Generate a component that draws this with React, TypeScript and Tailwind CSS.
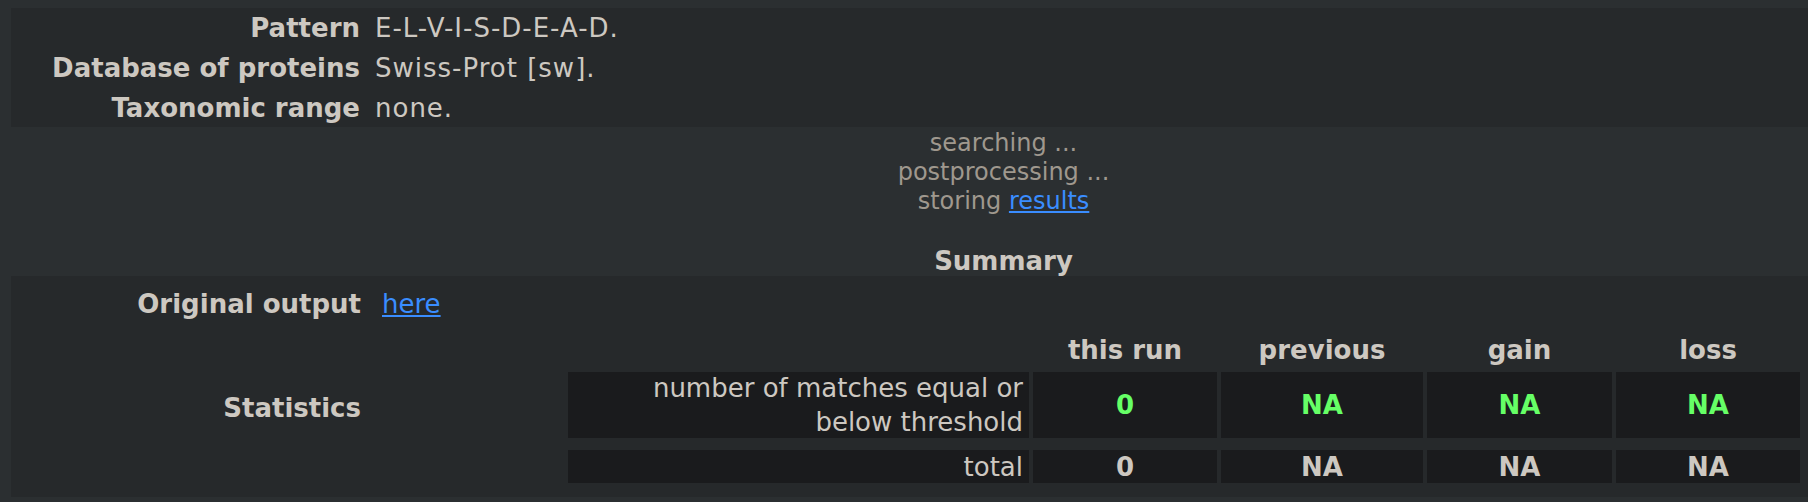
const fields = [
  { label: "Pattern", value: "E-L-V-I-S-D-E-A-D." },
  { label: "Database of proteins", value: "Swiss-Prot [sw]." },
  { label: "Taxonomic range", value: "none." },
]

const heads = ["this run", "previous", "gain", "loss"]

const rows = [
  {
    label: ["number of matches equal or", "below threshold"],
    values: ["0", "NA", "NA", "NA"],
    green: true,
    height: "h-[66px]",
  },
  {
    label: ["total"],
    values: ["0", "NA", "NA", "NA"],
    green: false,
    height: "h-[33px]",
  },
]

export default function App() {
  return (
    <div
      className="h-[502px] w-[1808px] overflow-hidden bg-[#2b2f31] pt-[8px] text-[26px] leading-[30px] text-[#cdc8c1]"
      style={{ fontFamily: '"DejaVu Sans", Verdana, sans-serif' }}
    >
      <div className="ml-[11px] w-[1985px]">
        {/* query parameters */}
        <div className="flex h-[119px] flex-col bg-[#26292b]">
          {fields.map((f, i) => (
            <div key={f.label} className={`flex items-center ${i === 2 ? "h-[39px]" : "h-[40px]"}`}>
              <span className="w-[349px] text-right font-bold">{f.label}</span>
              <span className="ml-[15px] tracking-[1px]">{f.value}</span>
            </div>
          ))}
        </div>

        {/* progress */}
        <div className="mt-[2px] flex flex-col items-center text-[24px] leading-[29px] text-[#9f988e]">
          <span>searching ...</span>
          <span>postprocessing ...</span>
          <span>
            storing{" "}
            <a href="#" className="text-[#3a8dff] underline">
              results
            </a>
          </span>
        </div>

        <div className="mt-[30px] text-center font-bold">Summary</div>

        {/* summary table */}
        <div className="flex h-[221px] flex-col bg-[#26292b]">
          <div className="flex h-[56px] items-center">
            <span className="w-[350px] text-right font-bold">Original output</span>
            <a href="#" className="ml-[21px] text-[#3a8dff] underline">
              here
            </a>
          </div>
          <div className="flex items-center">
            <span className="w-[350px] text-right font-bold">Statistics</span>
            <div className="ml-[207px] grid grid-cols-[461px_184px_202px_185px_184px] gap-x-[4px]">
              <div className="h-[36px]" />
              {heads.map((h) => (
                <div key={h} className="flex h-[36px] items-center justify-center font-bold">
                  {h}
                </div>
              ))}
              {rows.map((r, ri) => (
                <div key={ri} className="contents">
                  <div
                    className={`${r.height} ${ri === 0 ? "mt-[4px] leading-[34px]" : "mt-[12px]"} flex flex-col items-end justify-center bg-[#1a1b1d] pr-[6px] text-right`}
                  >
                    {r.label.map((l) => (
                      <span key={l}>{l}</span>
                    ))}
                  </div>
                  {r.values.map((v, vi) => (
                    <div
                      key={vi}
                      className={`${r.height} ${ri === 0 ? "mt-[4px]" : "mt-[12px]"} flex items-center justify-center bg-[#1a1b1d] font-bold ${
                        r.green ? "text-[#66ff66]" : ""
                      }`}
                    >
                      {v}
                    </div>
                  ))}
                </div>
              ))}
            </div>
          </div>
        </div>
      </div>
    </div>
  )
}
